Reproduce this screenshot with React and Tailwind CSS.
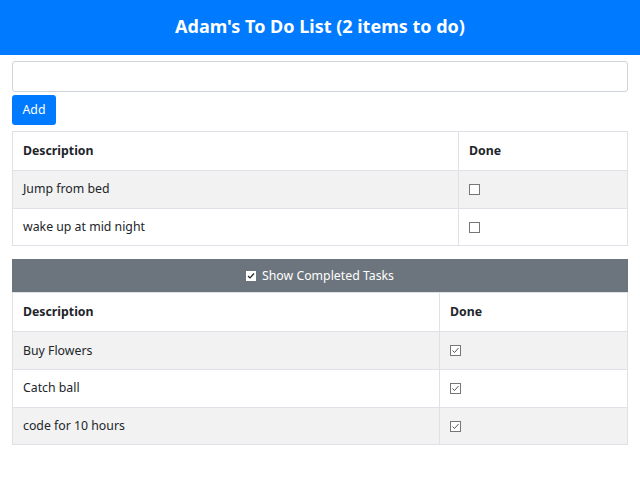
import React from "react";

function Box({ checked, variant }) {
  if (variant === "bar") {
    return (
      <span className="inline-flex w-[10px] h-[10px] bg-white items-center justify-center">
        <svg width="8" height="8" viewBox="0 0 8 8">
          <path d="M1 4 L3 6 L7 1.5" fill="none" stroke="#222" strokeWidth="1.2" />
        </svg>
      </span>
    );
  }
  return (
    <span className="inline-flex w-[11px] h-[11px] border border-[#767676] bg-white items-center justify-center">
      {checked && (
        <svg width="9" height="9" viewBox="0 0 9 9">
          <path d="M1.5 4.5 L3.5 6.5 L7.5 2" fill="none" stroke="#555" strokeWidth="1" />
        </svg>
      )}
    </span>
  );
}

function Table({ rows, col1, checked }) {
  return (
    <table className="w-full table-fixed border-collapse text-[12.3px] text-[#212529]">
      <colgroup>
        <col style={{ width: col1 }} />
        <col />
      </colgroup>
      <thead>
        <tr className="h-[39px]">
          <th className="border border-[#dee2e6] px-[10px] text-left font-bold align-middle">Description</th>
          <th className="border border-[#dee2e6] px-[10px] text-left font-bold align-middle">Done</th>
        </tr>
      </thead>
      <tbody>
        {rows.map((r, i) => (
          <tr key={r} className={`h-[37.7px] ${i % 2 === 0 ? "bg-[#f2f2f2]" : "bg-white"}`}>
            <td className="border border-[#dee2e6] px-[10px] align-middle">{r}</td>
            <td className="border border-[#dee2e6] px-[10px] align-middle">
              <span className="flex items-center">
                <Box checked={checked} />
              </span>
            </td>
          </tr>
        ))}
      </tbody>
    </table>
  );
}

export default function App() {
  return (
    <div className="w-[640px] h-[482px] bg-white" style={{ fontFamily: '"Noto Sans", "Open Sans", sans-serif' }}>
      <div className="h-[55px] bg-[#007bff] flex items-center justify-center pb-[3px]">
        <h4 className="text-white font-bold text-[18px] leading-none">Adam's To Do List (2 items to do)</h4>
      </div>
      <div className="px-[12px]">
        <div className="mt-[6px] h-[31px] border border-[#ced4da] rounded-[3px] bg-white" />
        <div className="mt-[3px]">
          <button className="h-[30px] w-[44px] bg-[#007bff] text-white text-[12.3px] rounded-[3px] flex items-center justify-center">
            Add
          </button>
        </div>
        <div className="mt-[6px]">
          <Table rows={["Jump from bed", "wake up at mid night"]} col1="446px" checked={false} />
        </div>
        <div className="mt-[13px] h-[33px] bg-[#6c757d] flex items-center justify-center gap-[6px] text-white text-[12.3px]">
          <Box variant="bar" />
          <span>Show Completed Tasks</span>
        </div>
        <Table rows={["Buy Flowers", "Catch ball", "code for 10 hours"]} col1="427px" checked={true} />
      </div>
    </div>
  );
}
